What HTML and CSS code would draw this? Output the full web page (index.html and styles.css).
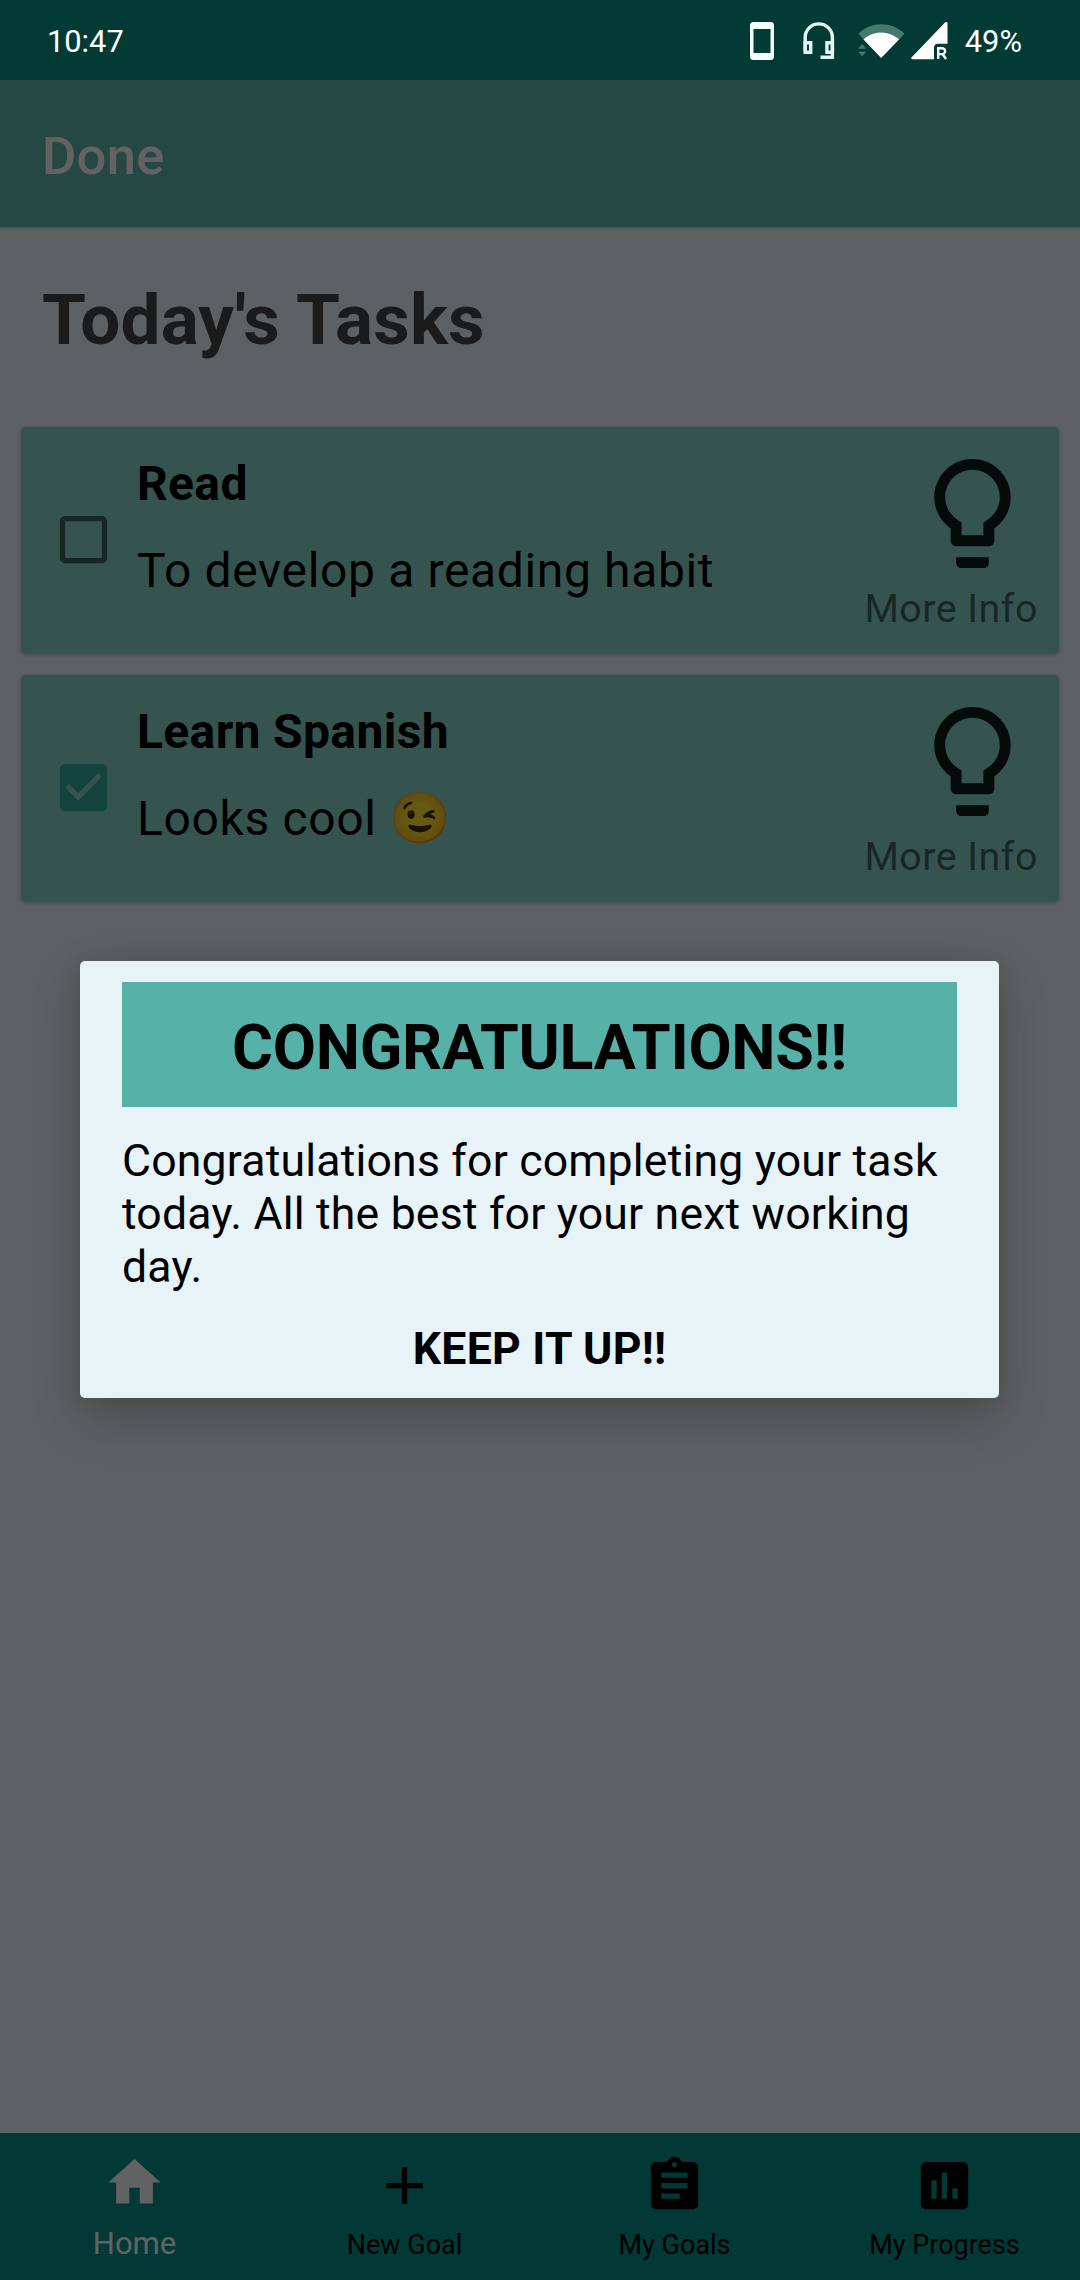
FILE: index.html
```html
<!DOCTYPE html>
<html lang="en">
<head>
<meta charset="utf-8">
<title>Done</title>
<link rel="stylesheet" href="styles.css">
</head>
<body>
<div class="screen">
  <header class="status">
    <span class="status-time">10:47</span>
    <div class="status-icons">
      <svg class="ic-phone" width="24" height="38" viewBox="0 0 24 38"><path fill="#f4fffd" fill-rule="evenodd" d="M3.500 0h17a3.500 3.500 0 0 1 3.500 3.500v31a3.500 3.500 0 0 1-3.500 3.500h-17A3.500 3.500 0 0 1 0 34.500v-31A3.500 3.500 0 0 1 3.500 0zM3.500 7v24h17V7z"/></svg>
      <svg class="ic-headset" width="32" height="38" viewBox="0 0 32 38"><g fill="none" stroke="#e4f4f2" stroke-width="3.400"><path d="M2.200 29.500V15.500a13.600 13.600 0 0 1 27.200 0V35.300H17.500"/><path d="M2.200 20.700h5.500v9.600H2.200zM29.400 20.700h-5.500v9.600h5.500z"/></g></svg>
      <svg class="ic-wifi" width="47" height="38" viewBox="0 0 47 38"><path fill="#447871" d="M.5 11.500C14-.700 33-.700 46.500 11.500L41 18C32 8 15 8 6 18z"/><path fill="#fff" d="M5.500 17.500C15 8.200 31 8.200 41 17.500L23.200 36z"/><path fill="#447871" d="M.2 26.800L4.200 22l4 4.800zM.2 29.800h8l-4 4.500z"/></svg>
      <svg class="ic-signal" width="37" height="38" viewBox="0 0 37 38"><path fill="#fff" d="M36.500 1.200v20.500H27a4 4 0 0 0-4 4V37.200H1.500c-1.500 0-1.800-1-.8-2L34 .6c1.200-1.200 2.500-.8 2.500.6z"/><g fill="none" stroke="#fff" stroke-width="2.400"><path d="M27.200 37V26.200h4a2.800 2.800 0 0 1 0 5.900h-4M31.500 32l3.600 5"/></g></svg>
      <span class="status-battery">49%</span>
    </div>
  </header>

  <div class="appbar">Done</div>

  <main class="content">
    <h1 class="title">Today's Tasks</h1>
    <section class="card">
      <svg class="check" viewBox="0 0 24 24"><path fill="#000" fill-opacity=".54" d="M19 5v14H5V5h14m0-2H5c-1.100 0-2 .9-2 2v14c0 1.100.9 2 2 2h14c1.100 0 2-.9 2-2V5c0-1.100-.9-2-2-2z"/></svg>
      <div class="card-text">
        <h2 class="card-title">Read</h2>
        <p class="card-desc">To develop a reading habit</p>
      </div>
      <div class="more">
        <svg class="bulb" viewBox="0 0 24 24"><path d="M9 21c0 .55.45 1 1 1h4c.55 0 1-.45 1-1v-1H9v1zm3-19C8.140 2 5 5.140 5 9c0 2.380 1.190 4.470 3 5.740V17c0 .55.45 1 1 1h6c.55 0 1-.45 1-1v-2.260c1.810-1.270 3-3.360 3-5.740 0-3.860-3.140-7-7-7zm2.850 11.100l-.85.6V16h-4v-2.300l-.85-.6C7.800 12.160 7 10.630 7 9c0-2.760 2.240-5 5-5s5 2.240 5 5c0 1.630-.8 3.160-2.150 4.100z"/></svg>
        <span class="more-label">More Info</span>
      </div>
    </section>
    <section class="card">
      <svg class="check" viewBox="0 0 24 24"><path fill="#2fa896" d="M19 3H5c-1.110 0-2 .9-2 2v14c0 1.100.89 2 2 2h14c1.110 0 2-.9 2-2V5c0-1.100-.89-2-2-2zm-9 14l-5-5 1.410-1.410L10 14.170l7.590-7.590L19 8l-9 9z"/></svg>
      <div class="card-text">
        <h2 class="card-title">Learn Spanish</h2>
        <p class="card-desc">Looks cool <span class="emoji">😉</span></p>
      </div>
      <div class="more">
        <svg class="bulb" viewBox="0 0 24 24"><path d="M9 21c0 .55.45 1 1 1h4c.55 0 1-.45 1-1v-1H9v1zm3-19C8.140 2 5 5.140 5 9c0 2.380 1.190 4.470 3 5.740V17c0 .55.45 1 1 1h6c.55 0 1-.45 1-1v-2.260c1.810-1.270 3-3.360 3-5.740 0-3.860-3.140-7-7-7zm2.850 11.100l-.85.6V16h-4v-2.300l-.85-.6C7.800 12.160 7 10.630 7 9c0-2.760 2.240-5 5-5s5 2.240 5 5c0 1.630-.8 3.160-2.150 4.100z"/></svg>
        <span class="more-label">More Info</span>
      </div>
    </section>
  </main>

  <nav class="nav">
    <a class="nav-item nav-active">
      <svg class="nav-icon" viewBox="0 0 24 24"><path d="M10 20v-6h4v6h5v-8h3L12 3 2 12h3v8z"/></svg>
      <span class="nav-label">Home</span>
    </a>
    <a class="nav-item">
      <svg class="nav-icon" viewBox="0 0 24 24"><path d="M19 13h-6v6h-2v-6H5v-2h6V5h2v6h6v2z"/></svg>
      <span class="nav-label">New Goal</span>
    </a>
    <a class="nav-item">
      <svg class="nav-icon" viewBox="0 0 24 24"><path d="M19 3h-4.180C14.400 1.840 13.300 1 12 1c-1.300 0-2.400.84-2.820 2H5c-1.100 0-2 .9-2 2v14c0 1.100.9 2 2 2h14c1.100 0 2-.9 2-2V5c0-1.100-.9-2-2-2zm-7 0c.55 0 1 .45 1 1s-.45 1-1 1-1-.45-1-1 .45-1 1-1zm2 14H7v-2h7v2zm3-4H7v-2h10v2zm0-4H7V7h10v2z"/></svg>
      <span class="nav-label">My Goals</span>
    </a>
    <a class="nav-item">
      <svg class="nav-icon" viewBox="0 0 24 24"><path d="M19 3H5c-1.100 0-2 .9-2 2v14c0 1.100.9 2 2 2h14c1.100 0 2-.9 2-2V5c0-1.100-.9-2-2-2zM9 17H7v-7h2v7zm4 0h-2V7h2v10zm4 0h-2v-4h2v4z"/></svg>
      <span class="nav-label">My Progress</span>
    </a>
  </nav>

  <div class="scrim"></div>
  <div class="dialog">
    <div class="dialog-title">CONGRATULATIONS!!</div>
    <p class="dialog-body">Congratulations for completing your task today. All the best for your next working day.</p>
    <div class="dialog-action">KEEP IT UP!!</div>
  </div>
</div>
</body>
</html>
```
FILE: styles.css
```css
* { box-sizing: border-box; }
body { margin: 0; font-family: Roboto, "Liberation Sans", sans-serif; color: #000; }
h1, h2, p { margin: 0; }
svg { display: block; }

.screen {
  position: relative;
  display: flex;
  flex-direction: column;
  width: 1080px;
  height: 2280px;
  overflow: hidden;
  background: #e8f3f8;
}

.status {
  position: relative;
  z-index: 3;
  display: flex;
  justify-content: space-between;
  height: 80px;
  padding: 22px 58px 0 47px;
  background: #023a36;
  color: #fff;
  font-size: 30.800px;
  line-height: 39px;
}
.status-icons { display: flex; }
.ic-headset { margin-left: 29px; }
.ic-wifi { margin-left: 23px; }
.ic-signal { margin-left: 6px; }
.status-battery { margin-left: 17px; }

.appbar {
  position: relative;
  height: 147px;
  padding-left: 42px;
  background: #5cb4ac;
  box-shadow: 0 1px 3px rgba(0, 0, 0, .25);
  color: #f8f4f5;
  font-size: 52.500px;
  font-weight: 500;
  letter-spacing: .3px;
  line-height: 152px;
}

.content {
  flex: 1;
  display: flex;
  flex-direction: column;
  gap: 21px;
  padding: 0 21px;
}
.title {
  height: 179px;
  padding: 53px 0 0 21px;
  color: #444;
  font-size: 71px;
  letter-spacing: .2px;
  line-height: 80px;
}

.card {
  display: flex;
  height: 227px;
  padding: 21px 21px 0 31px;
  border-radius: 5px;
  background: #84cfc5;
  box-shadow: 0 1px 4px rgba(0, 0, 0, .28);
}
.check { width: 63px; height: 63px; margin-top: 60px; }
.card-text { flex: 1; padding: 8px 0 0 22px; }
.card-title { font-size: 48px; letter-spacing: .35px; line-height: 56px; }
.card-desc { margin-top: 31px; font-size: 48px; letter-spacing: .64px; line-height: 56px; white-space: nowrap; }
.emoji { font-family: "Noto Color Emoji", sans-serif; font-size: 49.500px; line-height: 1; }
.more { display: flex; flex-direction: column; align-items: flex-end; }
.bulb { width: 131px; height: 131px; fill: #0e1c19; }
.more-label { margin-top: 7px; color: rgba(0, 0, 0, .54); font-size: 39.400px; letter-spacing: .5px; line-height: 46px; }

.nav { display: flex; height: 147px; background: #059087; }
.nav-item { flex: 1; display: flex; flex-direction: column; align-items: center; padding: 21px 1px 0 0; }
.nav-icon { width: 63px; height: 63px; }
.nav-label { margin-top: 10px; font-size: 27px; line-height: 36px; }
.nav-active { padding-top: 18px; color: #f8f4f5; }
.nav-active .nav-icon { fill: #f8f4f5; }
.nav-active .nav-label { margin-top: 12px; font-size: 31px; }

.scrim { position: absolute; inset: 0; background: rgba(0, 0, 0, .6); }

.dialog {
  position: absolute;
  left: 80px;
  top: 961px;
  width: 919px;
  height: 437px;
  padding: 21px 42px 0;
  border-radius: 5px;
  background: #e8f3f8;
  box-shadow: 0 20px 50px rgba(0, 0, 0, .2), 0 0 22px rgba(0, 0, 0, .1);
}
.dialog-title {
  height: 125px;
  background: #56b2a8;
  font-size: 62.700px;
  font-weight: 700;
  letter-spacing: -.3px;
  line-height: 131px;
  text-align: center;
}
.dialog-body { margin-top: 28px; font-size: 44.600px; letter-spacing: .18px; line-height: 53px; }
.dialog-action { margin-top: 29px; font-size: 44.600px; font-weight: 700; letter-spacing: .25px; line-height: 53px; text-align: center; }
```
